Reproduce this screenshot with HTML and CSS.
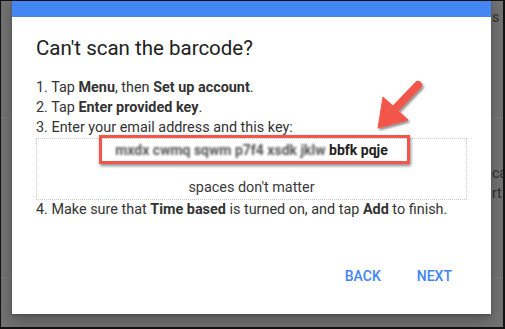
FILE: index.html
```html
<!DOCTYPE html>
<html>
<head>
<meta charset="utf-8">
<link rel="stylesheet" href="styles.css">
</head>
<body>
<div class="frame">
  <div class="backdrop">
    <div class="bg-row bg-row-top"><span class="bg-text bg-t1">s c</span></div>
    <div class="bg-row bg-row-mid">
      <span class="bg-text bg-t2">ca</span>
      <span class="bg-text">rt.</span>
    </div>
  </div>

  <div class="dialog">
    <div class="dialog-bar"></div>
    <div class="dialog-body">
      <h1 class="title">Can't scan the barcode?</h1>
      <div class="step">1. Tap <b>Menu</b>, then <b>Set up account</b>.</div>
      <div class="step">2. Tap <b>Enter provided key</b>.</div>
      <div class="step">3. Enter your email address and this key:</div>
      <div class="keybox">
        <div class="key"><span class="blur">mxdx cwmq sqwm p7f4 xsdk jklw</span> <b>bbfk pqje</b></div>
        <div class="hint">spaces don't matter</div>
      </div>
      <div class="step">4. Make sure that <b>Time based</b> is turned on, and tap <b>Add</b> to finish.</div>
    </div>
    <div class="footer">
      <span class="btn">BACK</span>
      <span class="btn">NEXT</span>
    </div>

    <div class="highlight"></div>
    <svg class="arrow" width="56" height="56" viewBox="0 0 56 56">
      <defs>
        <filter id="sh" x="-30%" y="-30%" width="160%" height="160%">
          <feDropShadow dx="1.5" dy="2" stdDeviation="1" flood-color="#000" flood-opacity="0.45"/>
        </filter>
      </defs>
      <g filter="url(#sh)" fill="#f2564b" stroke="#f2564b">
        <line x1="48" y1="7" x2="25" y2="31" stroke-width="8" stroke-linecap="round"/>
        <polygon points="13,19 8,50 38,42" stroke-width="1" stroke-linejoin="round"/>
      </g>
    </svg>
  </div>
</div>
</body>
</html>
```

FILE: styles.css
```css
html, body {
  margin: 0;
  padding: 0;
  background: #111;
}

.frame {
  position: relative;
  width: 505px;
  height: 329px;
  box-sizing: border-box;
  border-style: solid;
  border-color: #111;
  border-width: 1px 2px 2px 1px;
  background: #727272;
  overflow: hidden;
  font-family: Roboto, "Liberation Sans", Arial, sans-serif;
}

.backdrop {
  display: flex;
  flex-direction: column;
}

.bg-row {
  display: flex;
  flex-direction: column;
  border-bottom: 1px solid #7e7e7e;
  padding-left: 491px;
  box-sizing: border-box;
  overflow: hidden;
}

.bg-row-top {
  height: 117px;
  padding-top: 6px;
}

.bg-row-mid {
  height: 160px;
  padding-top: 45px;
}

.bg-text {
  font-size: 14px;
  line-height: 20px;
  color: #2e2e2e;
  white-space: nowrap;
}

.dialog {
  position: absolute;
  left: 11px;
  top: 0;
  width: 479px;
  height: 313px;
  background: #fff;
  box-shadow: 0 6px 14px rgba(0, 0, 0, 0.28), 0 1px 3px rgba(0, 0, 0, 0.2);
  display: flex;
  flex-direction: column;
}

.dialog-bar {
  height: 16px;
  background: #4486f3;
}

.dialog-body {
  padding: 19px 24px 0;
}

.title {
  margin: 0 0 18px;
  font-size: 20.5px;
  line-height: 24px;
  font-weight: 400;
  color: #212121;
}

.step {
  font-size: 14.4px;
  line-height: 20px;
  color: #333;
  white-space: nowrap;
}

.step b {
  font-weight: 700;
  color: #333;
}

.keybox {
  border: 1px dotted #c8c8c8;
  padding: 1px 0 1px;
  text-align: center;
  font-size: 14.4px;
  line-height: 20px;
  color: #333;
}

.key {
  margin-bottom: 18px;
  white-space: nowrap;
  font-size: 14px;
}

.key b {
  font-weight: 700;
  color: #222;
}

.blur {
  font-weight: 700;
  color: #555;
  filter: blur(1.3px);
}

.hint {
  color: #3a3a3a;
}

.footer {
  margin-top: auto;
  padding: 0 31px 20px;
  display: flex;
  justify-content: flex-end;
  gap: 20px;
}

.btn {
  height: 36px;
  line-height: 36px;
  padding: 0 8px;
  font-size: 14px;
  font-weight: 500;
  color: #4285f4;
}

.highlight {
  position: absolute;
  left: 87px;
  top: 134px;
  width: 311px;
  height: 29px;
  box-sizing: border-box;
  border: 3px solid #f2564b;
  box-shadow: 1px 2px 3px rgba(0, 0, 0, 0.45);
}

.arrow {
  position: absolute;
  left: 358px;
  top: 77px;
  overflow: visible;
}
```
